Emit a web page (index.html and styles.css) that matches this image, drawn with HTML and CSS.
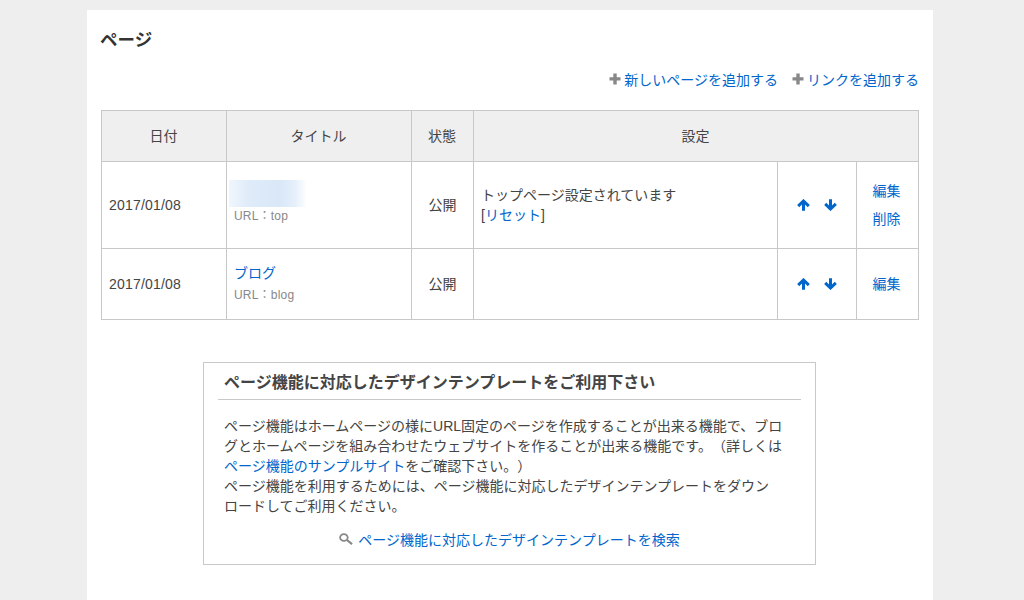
FILE: index.html
```html
<!DOCTYPE html>
<html lang="ja">
<head>
    <meta charset="UTF-8">
    <meta name="viewport" content="width=device-width, initial-scale=1.0">
    <title>ページ</title>
    <link rel="stylesheet" href="styles.css">
</head>
<body>
    <svg class="sprite" width="0" height="0">
        <symbol id="plus" viewBox="0 0 12 12">
            <path d="M4.3 0.5h3.4v3.8h3.8v3.2H7.7v4H4.3v-4H0.5V4.3h3.8z"/>
        </symbol>
        <symbol id="up" viewBox="0 0 13 12">
            <path d="M6.5 11.8V2.5M1.2 7.1l5.3-5.1 5.3 5.1" fill="none" stroke="currentColor" stroke-width="3"/>
        </symbol>
        <symbol id="down" viewBox="0 0 13 12">
            <path d="M6.5 0.2v9.3M1.2 4.9l5.3 5.1 5.3-5.1" fill="none" stroke="currentColor" stroke-width="3"/>
        </symbol>
        <symbol id="search" viewBox="0 0 14 12">
            <ellipse cx="4.9" cy="4.5" rx="3.8" ry="3.4" fill="none" stroke="currentColor" stroke-width="1.8"/>
            <path d="M7.9 7l5.2 4.1" fill="none" stroke="currentColor" stroke-width="2.2"/>
        </symbol>
    </svg>

    <div class="container">
        <h1>ページ</h1>

        <div class="actions">
            <a href="#"><svg class="icon-plus"><use href="#plus"/></svg>新しいページを追加する</a>
            <a href="#"><svg class="icon-plus wide"><use href="#plus"/></svg>リンクを追加する</a>
        </div>

        <table class="page-table">
            <colgroup>
                <col class="col-date">
                <col class="col-title">
                <col class="col-status">
                <col class="col-setting">
                <col class="col-order">
                <col class="col-edit">
            </colgroup>
            <thead>
                <tr>
                    <th>日付</th>
                    <th>タイトル</th>
                    <th>状態</th>
                    <th colspan="3">設定</th>
                </tr>
            </thead>
            <tbody>
                <tr class="row-top">
                    <td class="date">2017/01/08</td>
                    <td>
                        <div class="masked"></div>
                        <div class="url">URL：top</div>
                    </td>
                    <td class="center">公開</td>
                    <td>トップページ設定されています<br>[<a href="#">リセット</a>]</td>
                    <td>
                        <div class="order">
                            <a href="#"><svg class="icon-arrow"><use href="#up"/></svg></a>
                            <a href="#"><svg class="icon-arrow"><use href="#down"/></svg></a>
                        </div>
                    </td>
                    <td class="center edit"><a href="#">編集</a><a href="#">削除</a></td>
                </tr>
                <tr class="row-blog">
                    <td class="date">2017/01/08</td>
                    <td>
                        <a class="page-link" href="#">ブログ</a>
                        <div class="url">URL：blog</div>
                    </td>
                    <td class="center">公開</td>
                    <td></td>
                    <td>
                        <div class="order">
                            <a href="#"><svg class="icon-arrow"><use href="#up"/></svg></a>
                            <a href="#"><svg class="icon-arrow"><use href="#down"/></svg></a>
                        </div>
                    </td>
                    <td class="center edit"><a href="#">編集</a></td>
                </tr>
            </tbody>
        </table>

        <div class="info-box">
            <h2>ページ機能に対応したデザインテンプレートをご利用下さい</h2>
            <p>
                ページ機能はホームページの様にURL固定のページを作成することが出来る機能で、ブロ<br>グとホームページを組み合わせたウェブサイトを作ることが出来る機能です。（詳しくは<br><a href="#">ページ機能のサンプルサイト</a>をご確認下さい。）<br>
                ページ機能を利用するためには、ページ機能に対応したデザインテンプレートをダウン<br>ロードしてご利用ください。
            </p>
            <div class="search-link">
                <svg class="icon-search"><use href="#search"/></svg>
                <a href="#">ページ機能に対応したデザインテンプレートを検索</a>
            </div>
        </div>
    </div>
</body>
</html>
```
FILE: styles.css
```css
* {
    box-sizing: border-box;
}
body {
    margin: 0;
    padding-top: 10px;
    height: 600px;
    overflow: hidden;
    background-color: #eeeeee;
    color: #444;
    font-family: "Liberation Sans", "Noto Sans CJK JP", sans-serif;
    font-size: 14px;
    line-height: 20px;
    text-spacing-trim: space-all;
}
a {
    color: #0066cc;
    text-decoration: none;
}
.sprite {
    display: block;
}
.container {
    width: 846px;
    height: 590px;
    margin-left: 87px;
    padding: 0 14px;
    background-color: #fff;
}
h1 {
    margin: 0 0 0 -1px;
    padding-top: 17px;
    font-size: 17.5px;
    line-height: 26px;
    color: #333;
}
.actions {
    display: flex;
    justify-content: flex-end;
    gap: 14px;
    padding-top: 17px;
    height: 57px;
}
.actions a {
    display: flex;
    white-space: nowrap;
}
.icon-plus {
    width: 12px;
    height: 12px;
    margin: 3px 3px 0 0;
    fill: #888;
}
.icon-plus.wide {
    margin-right: 3px;
}
.page-table {
    width: 818px;
    table-layout: fixed;
    border-collapse: collapse;
}
.page-table th,
.page-table td {
    border: 1px solid #c8c8c8;
    padding: 0 7px;
}
.page-table th {
    height: 51px;
    padding-right: 8px;
    background-color: #efefef;
    font-weight: normal;
}
.row-top {
    height: 87px;
}
.row-blog {
    height: 71px;
}
.col-date {
    width: 125px;
}
.col-title {
    width: 185px;
}
.col-status {
    width: 62px;
}
.col-setting {
    width: 304px;
}
.col-order {
    width: 79px;
}
.col-edit {
    width: 62px;
}
.date {
    letter-spacing: 0.2px;
}
.page-table .center {
    text-align: center;
}
.page-table .edit {
    padding-right: 9px;
}
.page-link {
    display: block;
}
.url {
    padding-top: 2px;
    font-size: 12px;
    letter-spacing: 0.2px;
    color: #888;
}
/* hidden page name */
.masked {
    width: 78px;
    height: 27px;
    margin: -5px 0 -3px -5px;
    background: linear-gradient(to right, #f0f6fd, #dfebf9 25%, #d9e7f8 65%, #e6f0fb 85%, #fff);
}
.order {
    display: flex;
    justify-content: center;
    gap: 14px;
}
.order a {
    display: block;
    height: 12px;
}
.icon-arrow {
    display: block;
    width: 13px;
    height: 12px;
}
.edit a {
    display: block;
    line-height: 28px;
}
.info-box {
    width: 613px;
    height: 203px;
    margin: 42px 0 0 102px;
    padding: 0 14px;
    border: 1px solid #c8c8c8;
}
.info-box h2 {
    margin: 0;
    height: 37px;
    padding: 8px 6px 0;
    border-bottom: 1px solid #c8c8c8;
    font-size: 16px;
    line-height: 24px;
}
.info-box p {
    margin: 16px 0 0;
    padding-left: 6px;
    white-space: nowrap;
}
.search-link {
    display: flex;
    justify-content: center;
    gap: 5px;
    margin-top: 14px;
}
.icon-search {
    width: 14px;
    height: 12px;
    margin-top: 3px;
    color: #888;
}
```
